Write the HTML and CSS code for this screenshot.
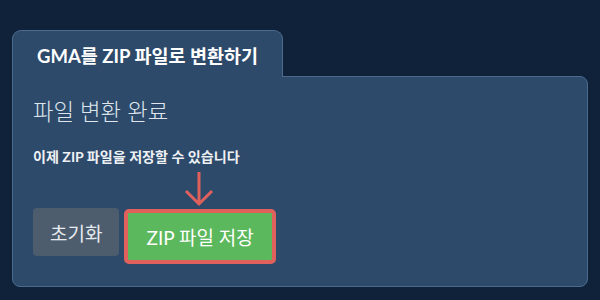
FILE: index.html
```html
<!DOCTYPE html>
<html>

<head>
    <meta charset="utf-8">
    <link rel="stylesheet" href="styles.css">
</head>

<body>
    <div class="wrap">
        <div class="tab">GMA를 ZIP 파일로 변환하기</div>

        <div class="panel">
            <p class="heading">파일 변환 완료</p>
            <p class="message">이제 ZIP 파일을 저장할 수 있습니다</p>

            <div class="buttons">
                <button class="reset-button">초기화</button>
                <div class="save-wrap">
                    <svg class="arrow" width="30" height="36" viewBox="0 0 30 36">
                        <path d="M15 1 V33 M2 20 L15 33 L28 20" fill="none" stroke="#e0605c" stroke-width="3" />
                    </svg>
                    <button class="save-button">ZIP 파일 저장</button>
                </div>
            </div>
        </div>
    </div>
</body>

</html>
```

FILE: styles.css
```css
body {
    margin: 0;
    background-color: #10223a;
    font-family: Lato, "Noto Sans CJK KR", sans-serif;
    color: white;
}

.wrap {
    margin: 30px 12px 0 12px;
    width: 576px;
}

.tab {
    display: inline-block;
    position: relative;
    z-index: 1;
    box-sizing: border-box;
    height: 47px;
    padding: 0 24px;
    line-height: 50px;
    margin-bottom: -1px;
    background-color: #2d4a6b;
    border: 1px solid #4c6a8d;
    border-bottom: none;
    border-radius: 9px 9px 0 0;
    font-size: 18.5px;
    font-weight: bold;
}

.panel {
    box-sizing: border-box;
    height: 211px;
    padding: 20px 20px 0 20px;
    background-color: #2d4a6b;
    border: 1px solid #4c6a8d;
    border-radius: 0 8px 8px 8px;
}

.heading {
    margin: 0;
    font-size: 22.3px;
    line-height: 30px;
    font-weight: 300;
    color: #dfe5ec;
}

.message {
    margin: 20px 0 0 0;
    font-size: 14.1px;
    line-height: 20px;
    font-weight: bold;
    color: #eef1f4;
}

.buttons {
    display: flex;
    align-items: flex-start;
    gap: 5px;
    margin-top: 42px;
}

.reset-button {
    margin-top: -1px;
    height: 48px;
    padding: 0 17px;
    background-color: #4d5d6e;
    border: none;
    border-radius: 4px;
    font-family: Lato, "Noto Sans CJK KR", sans-serif;
    font-size: 19px;
    color: #e6eaee;
}

.save-wrap {
    position: relative;
}

.arrow {
    position: absolute;
    left: 60px;
    top: -38px;
}

.save-button {
    display: block;
    height: 55px;
    padding: 0 18px;
    background-color: #5cb85c;
    border: 4px solid #e0605c;
    border-radius: 5px;
    font-family: Lato, "Noto Sans CJK KR", sans-serif;
    font-size: 19px;
    color: white;
}
```
